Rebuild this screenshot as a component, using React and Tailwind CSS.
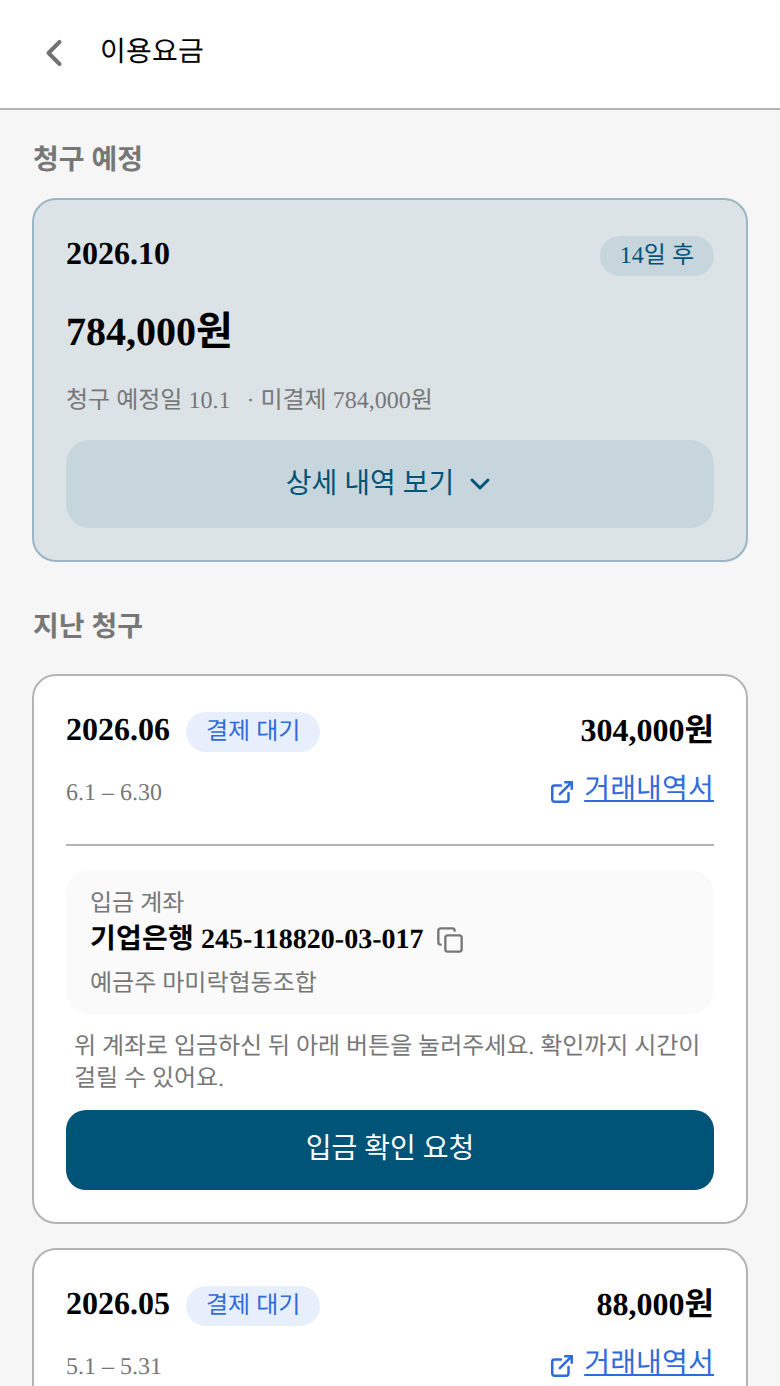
import { ChevronDown, ChevronLeft, Copy, ExternalLink } from "lucide-react";

const fontStack = "font-['Liberation_Serif','Noto_Sans_CJK_KR',serif]";

function BillHeader({ month, amount, range }) {
  return (
    <div className="flex justify-between">
      <div>
        <div className="flex items-start gap-4 h-12">
          <span className="text-[32px] font-bold leading-[42px] text-black">{month}</span>
          <span className="flex items-center h-10 mt-1 px-5 rounded-full bg-[#e8effc] text-2xl text-[#2f6bdc]">
            결제 대기
          </span>
        </div>
        <p className="mt-[17px] text-2xl leading-10 text-[#777777]">{range}</p>
      </div>
      <div className="flex flex-col items-end">
        <span className="text-[32px] font-bold leading-[44px] text-black">{amount}</span>
        <a className="mt-[18px] flex items-center gap-[9px] text-[28px] leading-10 text-[#2f6bdc] underline">
          <ExternalLink size={26} strokeWidth={2.3} className="mt-1" />
          <span className="tracking-[0.2px]">거래내역서</span>
        </a>
      </div>
    </div>
  );
}

export default function App() {
  return (
    <div className={`${fontStack} [text-rendering:geometricPrecision] w-[780px] h-[1386px] overflow-hidden bg-[#f6f6f6]`}>
      <header className="flex items-center h-[110px] pb-0.5 bg-white border-b-2 border-[#b3b3b3]">
        <button className="flex items-center justify-center w-[44px] ml-8 text-[#737373]">
          <ChevronLeft size={44} strokeWidth={2.2} />
        </button>
        <h1 className="ml-6 text-[28px] tracking-[0.2px] text-black">이용요금</h1>
      </header>

      <main className="px-8 pt-[31px]">
        <h2 className="ml-px text-[28px] font-bold leading-10 text-[#777777]">청구 예정</h2>
        <section className="mt-[17px] h-[364px] p-8 rounded-3xl border-2 border-[#9ab5c5] bg-[#dce3e7]">
          <div className="flex items-start justify-between h-12">
            <span className="text-[32px] font-bold leading-[42px] text-black">2026.10</span>
            <span className="flex items-center h-10 mt-1 px-5 rounded-full bg-[#c7d5dc] text-2xl text-[#005478]">
              14일 후
            </span>
          </div>
          <p className="mt-[22px] text-[40px] font-bold leading-[60px] text-black">784,000원</p>
          <p className="mt-[19px] text-2xl leading-10 text-[#777777]">
            청구 예정일 10.1<span className="ml-4">·</span> 미결제 784,000원
          </p>
          <button className="flex items-center justify-center gap-[10px] w-full h-[88px] mt-[19px] pl-0.5 rounded-3xl bg-[#c7d5dc] text-[28px] text-[#005478]">
            상세 내역 보기
            <ChevronDown size={32} strokeWidth={2.2} />
          </button>
        </section>

        <h2 className="ml-px mt-[46px] text-[28px] font-bold leading-10 text-[#777777]">지난 청구</h2>
        <section className="mt-[26px] p-8 rounded-3xl border-2 border-[#b3b3b3] bg-white">
          <BillHeader month="2026.06" amount="304,000원" range="6.1 – 6.30" />
          <div className="mt-[31px] border-t-2 border-[#b3b3b3]" />
          <div className="mt-6 h-[144px] px-6 pt-4 rounded-3xl bg-[#fafafa]">
            <p className="text-2xl leading-9 text-[#777777]">입금 계좌</p>
            <div className="flex items-center gap-[13px] h-[34px] mt-px text-[28px] font-bold text-black">
              <span>
                <span className="tracking-[0.25px]">기업은행</span> 245-118820-03-017
              </span>
              <Copy size={28} strokeWidth={2} className="text-[#777777]" />
            </div>
            <p className="mt-[7px] text-2xl leading-10 text-[#777777]">예금주 마미락협동조합</p>
          </div>
          <p className="mt-[17px] px-2 text-2xl leading-8 tracking-[-0.05px] text-[#777777]">
            위 계좌로 입금하신 뒤 아래 버튼을 눌러주세요. 확인까지 시간이 걸릴 수 있어요.
          </p>
          <button className="w-full h-20 mt-[15px] pb-0.5 rounded-[20px] bg-[#005478] text-[28px] text-white">입금 확인 요청</button>
        </section>

        <section className="mt-6 p-8 rounded-3xl border-2 border-[#b3b3b3] bg-white">
          <BillHeader month="2026.05" amount="88,000원" range="5.1 – 5.31" />
        </section>
      </main>
    </div>
  );
}
